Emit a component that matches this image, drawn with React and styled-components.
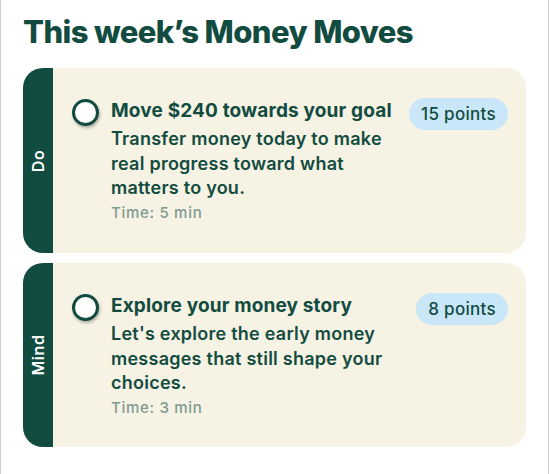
import React from "react";
import styled, { createGlobalStyle } from "styled-components";

const Global = createGlobalStyle`
  html, body { margin: 0; padding: 0; background: #ffffff; }
  body { font-family: Inter, "Noto Sans", sans-serif; }
`;

const GREEN = "#124C40";

const Frame = styled.div`
  box-sizing: border-box;
  width: 549px;
  height: 474px;
  border-left: 1px solid #cfcfcf;
  border-right: 1px solid #cfcfcf;
  padding: 12px 22px 0 22px;
  display: flex;
  flex-direction: column;
`;

const Heading = styled.h1`
  margin: 0 0 16px 0;
  font-size: 31px;
  line-height: 40px;
  font-weight: 800;
  color: ${GREEN};
  letter-spacing: -0.6px;
`;

const List = styled.div`
  display: flex;
  flex-direction: column;
  gap: 10px;
`;

const Card = styled.div`
  display: flex;
  background: #F6F2E4;
  border-radius: 20px;
  overflow: hidden;
  height: ${(p) => p.$h}px;
`;

const Strip = styled.div`
  width: 30px;
  flex: none;
  background: ${GREEN};
  display: flex;
  align-items: center;
  justify-content: center;
`;

const StripLabel = styled.span`
  transform: rotate(-90deg);
  color: #ffffff;
  font-size: 16px;
  font-weight: 600;
  letter-spacing: 0.6px;
  white-space: nowrap;
`;

const Body = styled.div`
  flex: 1;
  display: flex;
  align-items: flex-start;
  padding: 30px 18px 0 19px;
`;

const Check = styled.div`
  box-sizing: border-box;
  flex: none;
  width: 27px;
  height: 27px;
  margin-top: 1px;
  border-radius: 50%;
  border: 3px solid ${GREEN};
  background: #ffffff;
  box-shadow: 1px 2px 3px rgba(0, 0, 0, 0.28);
`;

const Text = styled.div`
  flex: 1;
  min-width: 0;
  margin-left: 12px;
  padding-top: 1px;
  display: flex;
  flex-direction: column;
`;

const Title = styled.div`
  font-size: 19px;
  line-height: 24px;
  font-weight: 700;
  color: ${GREEN};
  letter-spacing: 0.15px;
  margin-bottom: 4px;
  white-space: nowrap;
`;

const Desc = styled.div`
  font-size: 18px;
  line-height: 24.5px;
  font-weight: 600;
  color: ${GREEN};
  letter-spacing: 0.25px;
`;

const Time = styled.div`
  margin-top: 2px;
  font-size: 15px;
  line-height: 20px;
  font-weight: 500;
  letter-spacing: 0.7px;
  color: #7F9A91;
`;

const Badge = styled.div`
  flex: none;
  margin-left: 18px;
  height: 32px;
  padding: 0 12px;
  border-radius: 16px;
  background: #C9E7F8;
  color: ${GREEN};
  font-size: 17px;
  font-weight: 500;
  letter-spacing: 0.3px;
  display: flex;
  align-items: center;
`;

const moves = [
  {
    tag: "Do",
    title: "Move $240 towards your goal",
    desc: "Transfer money today to make real progress toward what matters to you.",
    time: "Time: 5 min",
    points: "15 points",
    h: 185,
  },
  {
    tag: "Mind",
    title: "Explore your money story",
    desc: "Let's explore the early money messages that still shape your choices.",
    time: "Time: 3 min",
    points: "8 points",
    h: 184,
  },
];

export default function App() {
  return (
    <>
      <Global />
      <Frame>
        <Heading>This week’s Money Moves</Heading>
        <List>
          {moves.map((m) => (
            <Card key={m.tag} $h={m.h}>
              <Strip>
                <StripLabel>{m.tag}</StripLabel>
              </Strip>
              <Body>
                <Check />
                <Text>
                  <Title>{m.title}</Title>
                  <Desc>{m.desc}</Desc>
                  <Time>{m.time}</Time>
                </Text>
                <Badge>{m.points}</Badge>
              </Body>
            </Card>
          ))}
        </List>
      </Frame>
    </>
  );
}
